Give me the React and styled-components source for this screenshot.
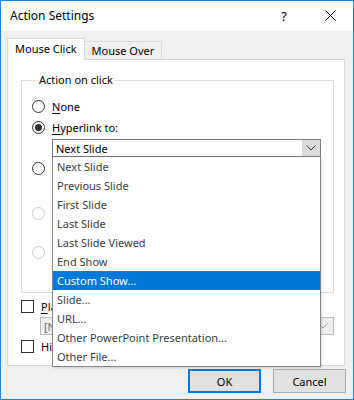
import React from "react";
import styled, { createGlobalStyle } from "styled-components";

const GlobalStyle = createGlobalStyle`
  html, body {
    margin: 0;
    padding: 0;
    background: #ffffff;
  }
  body {
    font-family: "Noto Sans", "Segoe UI", sans-serif;
    font-size: 11px;
    color: #000;
  }
  * {
    box-sizing: border-box;
  }
`;

const LINK_OPTIONS = [
  "Next Slide",
  "Previous Slide",
  "First Slide",
  "Last Slide",
  "Last Slide Viewed",
  "End Show",
  "Custom Show...",
  "Slide...",
  "URL...",
  "Other PowerPoint Presentation...",
  "Other File...",
];

const Chevron = ({ color = "#3c3c3c" }) => (
  <svg width="10" height="6" viewBox="0 0 10 6">
    <path d="M0.5 0.5 L5 5 L9.5 0.5" fill="none" stroke={color} strokeWidth="1" />
  </svg>
);

const App = () => {
  return (
    <>
      <GlobalStyle />
      <Window>
        <TitleBar>
          <Title>Action Settings</Title>
          <TitleButtons>
            <HelpButton>?</HelpButton>
            <CloseButton>
              <svg width="11" height="11" viewBox="0 0 11 11">
                <path d="M0.5 0.5 L10.5 10.5 M10.5 0.5 L0.5 10.5" stroke="#000" strokeWidth="1" />
              </svg>
            </CloseButton>
          </TitleButtons>
        </TitleBar>

        <Body>
          <TabStrip>
            <Tab active>Mouse Click</Tab>
            <Tab>Mouse Over</Tab>
          </TabStrip>

          <TabPanel>
            <GroupBox>
              <Legend>Action on click</Legend>

              <OptionRow top={10}>
                <Radio />
                <Label>
                  <u>N</u>one
                </Label>
              </OptionRow>

              <OptionRow top={5}>
                <Radio checked />
                <Label>
                  <u>H</u>yperlink to:
                </Label>
              </OptionRow>

              <ComboWrap>
                <Combo>
                  <ComboText>Next Slide</ComboText>
                  <ComboButton>
                    <Chevron />
                  </ComboButton>
                </Combo>
                <DropList>
                  {LINK_OPTIONS.map((opt) => (
                    <DropItem key={opt} selected={opt === "Custom Show..."}>
                      {opt}
                    </DropItem>
                  ))}
                </DropList>
              </ComboWrap>

              {/* the labels of these three options sit under the open list */}
              <OptionRow top={3}>
                <Radio />
              </OptionRow>

              <OptionRow top={29}>
                <Radio disabled />
              </OptionRow>

              <OptionRow top={23}>
                <Radio disabled />
              </OptionRow>
            </GroupBox>

            <CheckRow top={6}>
              <Checkbox />
              <Label>
                <u>P</u>lay sound:
              </Label>
            </CheckRow>

            <SoundCombo>
              <SoundText>[No Sound]</SoundText>
              <Chevron color="#a0a0a0" />
            </SoundCombo>

            <CheckRow top={4}>
              <Checkbox />
              <Label>
                Hi<u>g</u>hlight click
              </Label>
            </CheckRow>
          </TabPanel>

          <Footer>
            <DialogButton primary>OK</DialogButton>
            <DialogButton>Cancel</DialogButton>
          </Footer>
        </Body>
      </Window>
    </>
  );
};

export default App;

// Styled Components
const Window = styled.div`
  width: 354px;
  height: 400px;
  border: 1px solid #1883d7;
  display: flex;
  flex-direction: column;
  background: #f0f0f0;
  overflow: hidden;
`;

const TitleBar = styled.div`
  flex: none;
  height: 30px;
  background: #ffffff;
  display: flex;
  align-items: center;
  justify-content: space-between;
  padding-left: 9px;
`;

const Title = styled.div`
  font-size: 12px;
  line-height: 16px;
  color: #000;
  margin-top: -1px;
`;

const TitleButtons = styled.div`
  display: flex;
  align-items: center;
  height: 100%;
`;

const HelpButton = styled.div`
  width: 46px;
  height: 100%;
  display: flex;
  align-items: center;
  justify-content: center;
  font-size: 13px;
  margin-top: -1px;
`;

const CloseButton = styled.div`
  width: 46px;
  height: 100%;
  display: flex;
  align-items: center;
  justify-content: center;
  margin-top: -1px;
`;

const Body = styled.div`
  flex: none;
  height: 368px;
  display: flex;
  flex-direction: column;
  padding: 7px 8px 0 6px;
`;

const TabStrip = styled.div`
  flex: none;
  display: flex;
  align-items: flex-end;
  height: 22px;
  position: relative;
  z-index: 1;
  margin-bottom: -1px;
`;

const Tab = styled.div`
  height: ${(p) => (p.active ? "22px" : "19px")};
  padding: 0 7px ${(p) => (p.active ? "2px" : "0")};
  display: flex;
  align-items: center;
  border: 1px solid #d9d9d9;
  border-bottom: ${(p) => (p.active ? "none" : "1px solid #d9d9d9")};
  border-left: ${(p) => (p.active ? "1px solid #d9d9d9" : "none")};
  background: ${(p) => (p.active ? "#ffffff" : "#f0f0f0")};
  font-size: 11px;
  line-height: 15px;
  color: #000;
`;

const TabPanel = styled.div`
  flex: none;
  height: 307px;
  background: #ffffff;
  border: 1px solid #d9d9d9;
  padding: 12px 10px 0 13px;
  display: flex;
  flex-direction: column;
`;

const GroupBox = styled.fieldset`
  flex: none;
  margin: 0;
  height: 221px;
  border: 1px solid #dcdcdc;
  padding: 0 0 0 10px;
  display: flex;
  flex-direction: column;
  align-items: flex-start;
`;

const Legend = styled.legend`
  padding: 0 2px;
  margin-left: 5px;
  font-size: 11px;
  line-height: 16px;
  color: #000;
`;

const OptionRow = styled.div`
  display: flex;
  align-items: center;
  height: 16px;
  margin-top: ${(p) => p.top}px;
`;

const Radio = styled.span`
  width: 13px;
  height: 13px;
  border-radius: 50%;
  border: 1px solid ${(p) => (p.disabled ? "#cccccc" : "#333333")};
  background: #ffffff;
  display: flex;
  align-items: center;
  justify-content: center;
  margin-right: 7px;

  &::after {
    content: "";
    width: 7px;
    height: 7px;
    border-radius: 50%;
    background: #333333;
    display: ${(p) => (p.checked ? "block" : "none")};
  }
`;

const Label = styled.span`
  font-size: 11px;
  line-height: 15px;
  color: ${(p) => (p.disabled ? "#a0a0a0" : "#000")};
  white-space: nowrap;

  u {
    text-decoration-thickness: 1px;
    text-underline-offset: 2px;
  }
`;

const ComboWrap = styled.div`
  position: relative;
  width: 269px;
  margin: 4px 0 0 20px;
`;

const Combo = styled.div`
  height: 18px;
  border: 1px solid #7a7a7a;
  background: #ffffff;
  display: flex;
  align-items: center;
  justify-content: space-between;
`;

const ComboText = styled.span`
  font-size: 11px;
  line-height: 15px;
  color: #000;
  padding-left: 3px;
`;

const ComboButton = styled.span`
  width: 18px;
  height: 100%;
  background: #dadada;
  display: flex;
  align-items: center;
  justify-content: center;
`;

const DropList = styled.div`
  position: absolute;
  top: 100%;
  left: 0;
  width: 100%;
  height: 210px;
  border: 1px solid #828790;
  border-top: none;
  background: #ffffff;
  z-index: 5;
  box-shadow: 1px 1px 2px rgba(0, 0, 0, 0.15);
  display: flex;
  flex-direction: column;
`;

const DropItem = styled.div`
  height: 19px;
  flex: none;
  display: flex;
  align-items: center;
  padding-left: 4px;
  font-size: 11px;
  color: ${(p) => (p.selected ? "#ffffff" : "#3c3c3c")};
  background: ${(p) => (p.selected ? "#0078d7" : "transparent")};
  white-space: nowrap;
`;

const CheckRow = styled.div`
  display: flex;
  align-items: center;
  height: 14px;
  margin-top: ${(p) => p.top}px;
`;

const Checkbox = styled.span`
  width: 13px;
  height: 13px;
  border: 1px solid #333333;
  background: #ffffff;
  margin-right: 7px;
`;

const SoundCombo = styled.div`
  height: 18px;
  margin: 4px 0 0 19px;
  border: 1px solid #bcbcbc;
  background: #efefef;
  display: flex;
  align-items: center;
  justify-content: space-between;
  padding: 0 5px 0 3px;
`;

const SoundText = styled.span`
  font-size: 11px;
  color: #6d6d6d;
`;

const Footer = styled.div`
  flex: none;
  display: flex;
  justify-content: flex-end;
  gap: 12px;
  padding-top: 3px;
  margin-right: -1px;
`;

const DialogButton = styled.button`
  width: 73px;
  height: 24px;
  font-family: "Noto Sans", "Segoe UI", sans-serif;
  font-size: 11px;
  color: #000;
  background: #e1e1e1;
  border: ${(p) => (p.primary ? "2px solid #0078d7" : "1px solid #adadad")};
  padding: 0;
  display: flex;
  align-items: center;
  justify-content: center;
`;
